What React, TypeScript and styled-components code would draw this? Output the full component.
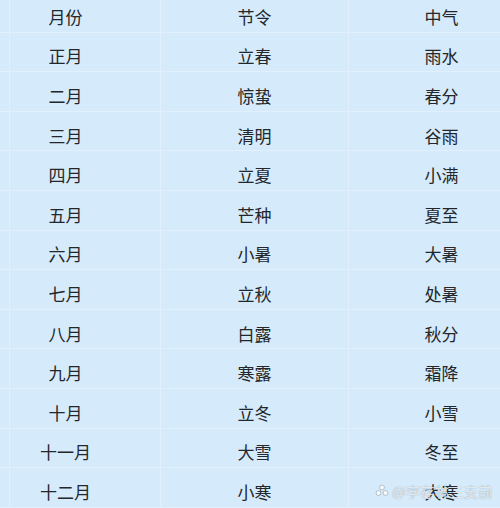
import styled, { createGlobalStyle } from "styled-components";

const GlobalStyle = createGlobalStyle`
  html, body {
    margin: 0;
    padding: 0;
    background: #d5eafa;
    overflow: hidden;
  }
  body {
    font-family: "Noto Sans CJK SC", "Noto Sans", sans-serif;
  }
`;

const rows = [
  ["月份", "节令", "中气"],
  ["正月", "立春", "雨水"],
  ["二月", "惊蛰", "春分"],
  ["三月", "清明", "谷雨"],
  ["四月", "立夏", "小满"],
  ["五月", "芒种", "夏至"],
  ["六月", "小暑", "大暑"],
  ["七月", "立秋", "处暑"],
  ["八月", "白露", "秋分"],
  ["九月", "寒露", "霜降"],
  ["十月", "立冬", "小雪"],
  ["十一月", "大雪", "冬至"],
  ["十二月", "小寒", "大寒"],
];

const Page = styled.div`
  position: relative;
  width: 500px;
  height: 508px;
  overflow: hidden;
  background: #d5eafa;
`;

const Table = styled.div`
  display: flex;
  flex-direction: column;
  margin-top: -7px;
`;

const Row = styled.div`
  display: grid;
  grid-template-columns: 9px 151px 188px 1fr;
  height: 39.6px;
  flex-shrink: 0;
  border-bottom: 1px solid #e1f0fc;
  box-sizing: border-box;
`;

const Cell = styled.div<{ $shift?: number }>`
  display: flex;
  align-items: center;
  justify-content: center;
  border-left: 1px solid #e1f0fc;
  padding-top: 8px;
  padding-left: ${(p) => (p.$shift && p.$shift > 0 ? p.$shift : 0)}px;
  padding-right: ${(p) => (p.$shift && p.$shift < 0 ? -p.$shift : 0)}px;
  font-size: 17px;
  color: #23262a;
  line-height: 1;
  &:first-child {
    border-left: none;
  }
`;

const Watermark = styled.div`
  position: absolute;
  right: 7px;
  bottom: 7px;
  display: flex;
  align-items: center;
  gap: 3px;
  font-size: 14px;
  color: rgba(255, 255, 255, 0.8);
  text-shadow: 0 0 1px rgba(80, 90, 100, 0.7);
  letter-spacing: 0.5px;
`;

export default function App() {
  return (
    <Page>
      <GlobalStyle />
      <Table>
        {rows.map((r, i) => (
          <Row key={i}>
            <Cell />
            <Cell $shift={-39}>{r[0]}</Cell>
            <Cell>{r[1]}</Cell>
            <Cell $shift={34}>{r[2]}</Cell>
          </Row>
        ))}
      </Table>
      <Watermark>
        <svg width="14" height="14" viewBox="0 0 14 14">
          <g fill="rgba(255,255,255,0.85)" stroke="rgba(80,90,100,0.55)" strokeWidth="0.6">
            <circle cx="7" cy="3.5" r="2.4" />
            <circle cx="3.5" cy="9" r="2.4" />
            <circle cx="10.5" cy="9" r="2.4" />
          </g>
        </svg>
        <span>@李存林三支前</span>
      </Watermark>
    </Page>
  );
}
